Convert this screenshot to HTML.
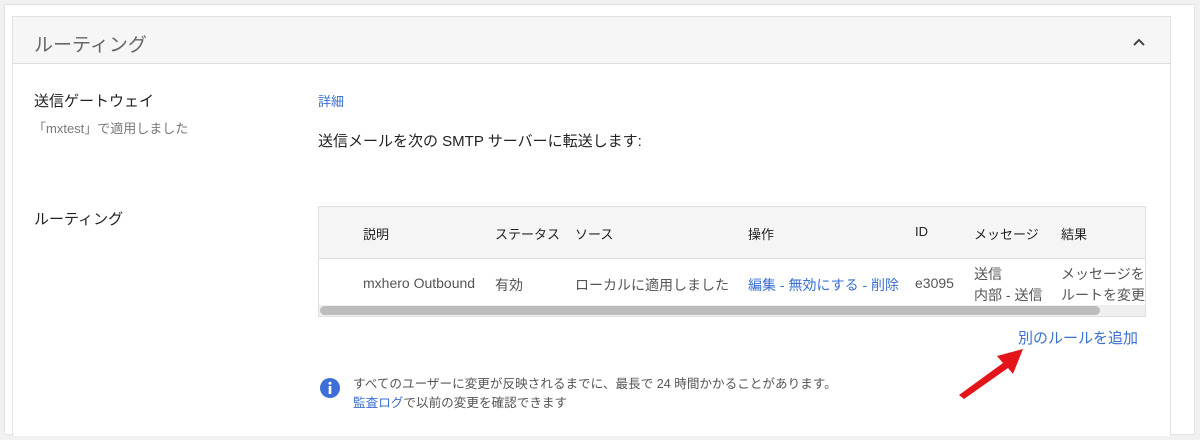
<!DOCTYPE html><html><head><meta charset="utf-8"><style>
body{margin:0;width:1200px;height:440px;background:#f1f1f1;font-family:"Liberation Sans","Noto Sans CJK JP",sans-serif;position:relative;overflow:hidden}
.a{position:absolute}
.outer{left:4px;top:4px;width:1191px;height:431px;background:#fff;border:1px solid #e4e4e4;box-sizing:border-box}
.card{left:12px;top:16px;width:1159px;height:420px;border:1px solid #e2e2e2;border-bottom:none;box-sizing:border-box;background:#fff}
.hdr{left:13px;top:17px;width:1157px;height:46px;background:#f6f6f6;border-bottom:1px solid #dcdcdc}
.t{white-space:nowrap}
.blue{color:#3b6fd1}
</style></head><body>
<div class="a outer"></div>
<div class="a card"></div>
<div class="a hdr"></div>
<div class="a t" style="left:34px;top:30px;font-size:19px;color:#666">ルーティング</div>
<svg class="a" style="left:1132px;top:37px" width="14" height="10"><path d="M2 8 L7 3 L12 8" stroke="#444" stroke-width="2" fill="none"/></svg>
<div class="a t" style="left:34px;top:90px;font-size:15px;color:#222">送信ゲートウェイ</div>
<div class="a t" style="left:33px;top:118px;font-size:13px;color:#777">「mxtest」で適用しました</div>
<div class="a t blue" style="left:318px;top:91px;font-size:13px">詳細</div>
<div class="a t" style="left:318px;top:130px;font-size:15px;color:#222">送信メールを次の SMTP サーバーに転送します:</div>
<div class="a t" style="left:34px;top:208px;font-size:15px;color:#222">ルーティング</div>
<div class="a" style="left:318px;top:206px;width:828px;height:111px;border:1px solid #e0e0e0;box-sizing:border-box;background:#fff"></div>
<div class="a" style="left:319px;top:207px;width:826px;height:51px;background:#f5f5f5;border-bottom:1px solid #e0e0e0"></div>
<div class="a" style="left:319px;top:305px;width:826px;height:11px;background:#efefef"></div>
<div class="a" style="left:320px;top:306px;width:780px;height:9px;background:#bdbdbd;border-radius:5px"></div>
<div style="font-size:13px;color:#222">
<div class="a t" style="left:363px;top:224px">説明</div>
<div class="a t" style="left:495px;top:224px">ステータス</div>
<div class="a t" style="left:575px;top:224px">ソース</div>
<div class="a t" style="left:748px;top:224px">操作</div>
<div class="a t" style="left:915px;top:224px">ID</div>
<div class="a t" style="left:974px;top:224px">メッセージ</div>
<div class="a t" style="left:1061px;top:224px">結果</div>
</div>
<div style="font-size:14px;color:#555">
<div class="a t" style="left:363px;top:275px">mxhero Outbound</div>
<div class="a t" style="left:495px;top:275px">有効</div>
<div class="a t" style="left:575px;top:275px">ローカルに適用しました</div>
<div class="a t blue" style="left:748px;top:275px">編集 - 無効にする - 削除</div>
<div class="a t" style="left:915px;top:275px">e3095</div>
<div class="a t" style="left:974px;top:264px;line-height:21px">送信<br>内部 - 送信</div>
<div class="a" style="left:1061px;top:264px;line-height:21px;width:84px;overflow:hidden;white-space:nowrap">メッセージを<br>ルートを変更</div>
</div>
<div class="a t blue" style="left:1018px;top:327px;font-size:15px">別のルールを追加</div>
<svg class="a" style="left:955px;top:345px" width="75" height="55"><path d="M4 50 L48 18 L42 11 L68 4 L58 29 L53 23 L9 54 Z" fill="#e3141a"/></svg>
<svg class="a" style="left:319px;top:377px" width="22" height="22"><circle cx="11" cy="11" r="10" fill="#3d6fd6"/><rect x="9.7" y="9" width="2.6" height="8" fill="#fff"/><circle cx="11" cy="6.3" r="1.5" fill="#fff"/></svg>
<div class="a t" style="left:353px;top:375px;font-size:12.6px;color:#555;line-height:19px">すべてのユーザーに変更が反映されるまでに、最長で 24 時間かかることがあります。<br><span class="blue">監査ログ</span>で以前の変更を確認できます</div>
</body></html>
